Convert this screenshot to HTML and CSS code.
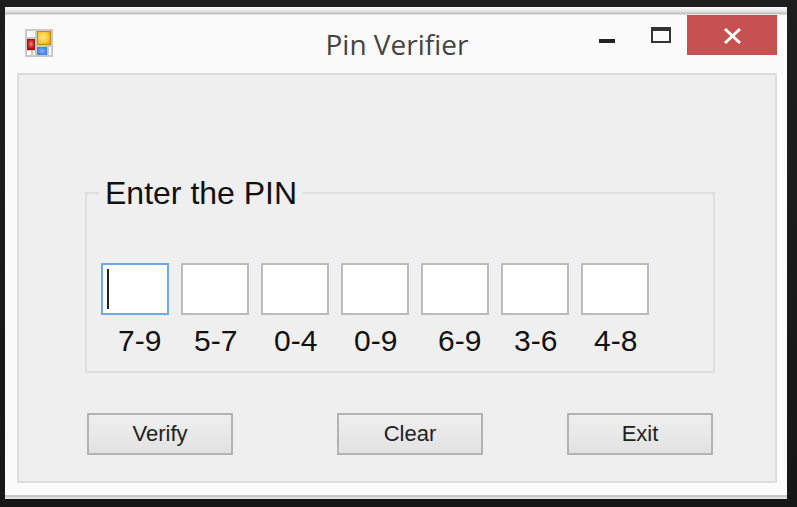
FILE: index.html
```html
<!DOCTYPE html>
<html lang="en">
<head>
<meta charset="utf-8">
<meta name="viewport" content="width=device-width, initial-scale=1">
<title>Pin Verifier</title>
<link rel="stylesheet" href="styles.css">
</head>
<body>
<main class="window">
  <header class="titlebar">
    <svg class="app-icon" viewBox="0 0 28 28" aria-hidden="true">
      <defs>
        <radialGradient id="gold" cx=".4" cy=".45" r=".75"><stop offset="0" stop-color="#ffe98a"/><stop offset=".6" stop-color="#f9ca34"/><stop offset="1" stop-color="#dba512"/></radialGradient>
        <radialGradient id="red"><stop offset="0" stop-color="#f0867c"/><stop offset="1" stop-color="#c4221a"/></radialGradient>
        <radialGradient id="blue"><stop offset="0" stop-color="#86b5fa"/><stop offset="1" stop-color="#437fe4"/></radialGradient>
      </defs>
      <rect width="28" height="28" fill="#c8c8c8"/>
      <path fill="#fff" d="M2 2h8v6H2zM2 22h4v4H2zM8 22h2v4H8zM24 18h2v8h-2z"/>
      <rect x="12" y="2" width="14" height="14" fill="#bd8e10"/>
      <rect x="13" y="3" width="12" height="12" fill="url(#gold)"/>
      <rect x="2" y="10" width="8" height="11" fill="#9d1712"/>
      <rect x="3" y="11" width="6" height="8" fill="url(#red)"/>
      <rect x="12" y="18" width="10" height="8" fill="url(#blue)"/>
    </svg>
    <h1 class="title">Pin Verifier</h1>
    <div class="controls">
      <button class="control" type="button" aria-label="Minimize">
        <svg class="glyph" viewBox="0 0 22 22" aria-hidden="true"><path fill="#222" d="M4 15h16v4H4z"/></svg>
      </button>
      <button class="control" type="button" aria-label="Maximize">
        <svg class="glyph" viewBox="0 0 22 22" aria-hidden="true"><path fill="#333" fill-rule="evenodd" d="M2 3h20v16H2zM4 7v10h16V7z"/></svg>
      </button>
      <button class="control close" type="button" aria-label="Close">
        <svg class="glyph" viewBox="0 0 22 22" aria-hidden="true"><path stroke="#fff" stroke-width="3" d="M4 5l15 14M19 5L4 19"/></svg>
      </button>
    </div>
  </header>
  <form class="client">
    <fieldset class="group">
      <legend class="legend">Enter the PIN</legend>
      <div class="digits">
        <div class="digit indented"><input class="box active" id="d1" type="text" maxlength="1"><label class="range" for="d1">7-9</label></div>
        <div class="digit"><input class="box" id="d2" type="text" maxlength="1"><label class="range" for="d2">5-7</label></div>
        <div class="digit"><input class="box" id="d3" type="text" maxlength="1"><label class="range" for="d3">0-4</label></div>
        <div class="digit"><input class="box" id="d4" type="text" maxlength="1"><label class="range" for="d4">0-9</label></div>
        <div class="digit indented"><input class="box" id="d5" type="text" maxlength="1"><label class="range" for="d5">6-9</label></div>
        <div class="digit"><input class="box" id="d6" type="text" maxlength="1"><label class="range" for="d6">3-6</label></div>
        <div class="digit"><input class="box" id="d7" type="text" maxlength="1"><label class="range" for="d7">4-8</label></div>
      </div>
    </fieldset>
    <div class="actions">
      <button class="action" type="button">Verify</button>
      <button class="action middle" type="button">Clear</button>
      <button class="action" type="button">Exit</button>
    </div>
  </form>
</main>
</body>
</html>
```
FILE: styles.css
```css
* {
  box-sizing: border-box;
}

body {
  margin: 0;
  min-height: 100vh;
  padding: 7px 10px 8px 5px;
  display: flex;
  background: linear-gradient(#1e1e1e, #151615);
  font-family: "Liberation Sans", Arial, sans-serif;
  color: #111;
}

.window {
  flex: 1;
  display: flex;
  flex-direction: column;
  padding: 8px 10px 16px 12px;
  background:
    linear-gradient(#fdfdfd, #dedede 5px, #c3c3c3 6px, #c3c3c3 7px, #fbfbfb 8px) top / 100% 8px no-repeat,
    linear-gradient(#c6c6c6 2px, #dfe1df 2px) bottom / 100% 4px no-repeat,
    #fbfbfb;
}

.titlebar {
  height: 58px;
  display: grid;
  grid-template-columns: 1fr auto 1fr;
  align-items: start;
}

.app-icon {
  width: 28px;
  height: 28px;
  margin: 14px 0 0 8px;
}

.title {
  margin: 10px 0 0;
  font: 400 28px/38px "Open Sans", "Noto Sans", sans-serif;
  color: #444;
}

.controls {
  display: flex;
  justify-content: flex-end;
}

.control {
  width: 54px;
  height: 40px;
  padding: 0;
  border: 0;
  background: none;
  display: flex;
  align-items: center;
  justify-content: center;
}

.close {
  width: 90px;
  background: #c75050;
}

.glyph {
  width: 22px;
  height: 22px;
  fill: none;
}

.client {
  flex: 1;
  padding: 98px 60px 26px 66px;
  border: 2px solid #dcdcdc;
  background: #efefef;
}

.group {
  min-width: 0;
  margin: 0;
  padding: 0 14px 12px;
  border: 2px solid #dedede;
}

.legend {
  margin-left: -2px;
  padding: 0 6px;
  font-size: 32px;
  line-height: 40px;
}

.digits {
  display: flex;
  gap: 12px;
  padding-top: 50px;
}

.digit {
  width: 68px;
  display: flex;
  flex-direction: column;
}

.box {
  width: 100%;
  height: 52px;
  padding: 0 6px;
  border: 2px solid #b9b9be;
  background: #fff;
  font: 30px "Liberation Sans", Arial, sans-serif;
}

.active {
  border-color: #6eaae6;
  background: linear-gradient(#222, #222) 4px center / 2px 40px no-repeat #fff;
}

.range {
  padding: 8px 0 0 13px;
  font-size: 30px;
  line-height: 36px;
}

.indented .range {
  padding-left: 17px;
}

.actions {
  display: grid;
  grid-template-columns: auto 1fr auto;
  padding: 40px 2px 0;
}

.action {
  width: 146px;
  height: 42px;
  padding: 0;
  border: 2px solid #b3b3b3;
  background: linear-gradient(#efefef, #e2e2e2);
  font: 22px "Liberation Sans", Arial, sans-serif;
  color: #222;
}

.middle {
  justify-self: center;
  margin-left: 20px;
}
```
